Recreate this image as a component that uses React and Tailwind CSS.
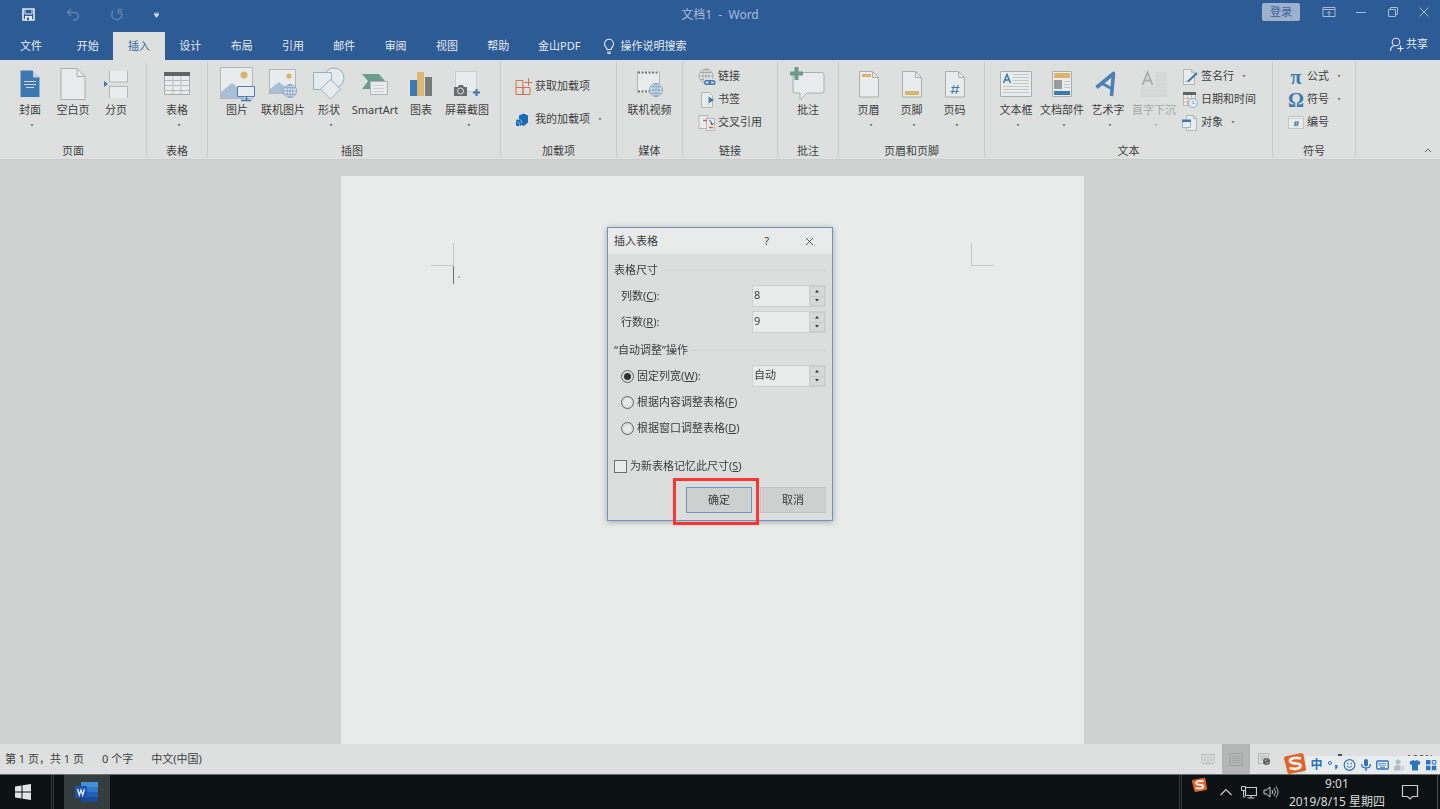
import React from "react";

const tabs = ["开始", "插入", "设计", "布局", "引用", "邮件", "审阅", "视图", "帮助"];

function Svg({ w, h, children, className = "" }) {
    return (
        <svg
            width={w}
            height={h}
            viewBox={`0 0 ${w} ${h}`}
            fill="none"
            className={`shrink-0 ${className}`}
            aria-hidden="true"
        >
            {children}
        </svg>
    );
}

function Arrow({ className = "" }) {
    return (
        <Svg w={4} h={3} className={className}>
            <path d="M0.500 0h3L2.500 2h-1z" fill="#7b7e7e" />
        </Svg>
    );
}

/* ---------- large ribbon icons ---------- */

const Globe = ({ x, y, r, stroke = "#7f9fc4" }) => (
    <g stroke={stroke} strokeWidth="0.9" transform={`translate(${x} ${y})`}>
        <circle r={r} fill="#e4e9ec" />
        <ellipse rx={r * 0.45} ry={r} />
        <path d={`M${-r} 0H${r}M${-r * 0.85} ${-r * 0.5}H${r * 0.85}M${-r * 0.85} ${r * 0.5}H${r * 0.85}M0 ${-r}V${r}`} />
    </g>
);

const CoverIcon = () => (
    <Svg w={20} h={28}>
        <path d="M0.5 0.5h12l7 7v19.5h-19z" fill="#3d78b0" />
        <path d="M13 0.5v7h6.500z" fill="#c3d3e2" />
        <path d="M4 11.500h12M4 14.500h12M6 17.500h8" stroke="#c9d8e6" />
    </Svg>
);

const BlankIcon = () => (
    <Svg w={26} h={34}>
        <path d="M1 1.500h16l8 8v23h-24z" fill="#e9ecec" stroke="#abaead" />
        <path d="M17 1.500v8h8" stroke="#abaead" />
    </Svg>
);

const BreakIcon = () => (
    <Svg w={26} h={30}>
        <path d="M6 2h19v11H6zM6 18h19v11H6z" fill="#e9ecec" />
        <path d="M6.500 2v11h18V2M6.500 29V17.500h18V29" stroke="#b4b7b6" />
        <path d="M1 12v6l4-3z" fill="#3d78b0" />
    </Svg>
);

const TableIcon = () => (
    <Svg w={26} h={26}>
        <path d="M0.500 1.500h25v22h-25z" fill="#e9ecec" stroke="#a9acab" />
        <path d="M0 1h26v4H0z" fill="#616464" />
        <path d="M9 5v18M17 5v18M1 9.500h24M1 14.500h24M1 19.500h24" stroke="#b9bcbb" />
    </Svg>
);

const PictureIcon = () => (
    <Svg w={36} h={36}>
        <path d="M1.500 1.500h32v31h-32z" fill="#e9ecec" stroke="#b4b7b6" />
        <circle cx="25" cy="9" r="3.500" fill="#dcb368" />
        <path d="M2 32V26l11-9 12 10v5z" fill="#a9bfd6" />
        <path d="M18.500 20.500h17v10h-17z" fill="#e9ecec" stroke="#4a82b8" />
        <path d="M27.500 31v3M22 34.500h10" stroke="#3d78b0" strokeWidth="1.500" />
    </Svg>
);

const OnlinePictureIcon = () => (
    <Svg w={30} h={32}>
        <path d="M1.500 1.500h26v24h-26z" fill="#e9ecec" stroke="#b4b7b6" />
        <circle cx="21" cy="8" r="2.600" fill="#dcb368" />
        <path d="M2 25v-4l9-7 9 7v4z" fill="#a9bfd6" />
        <Globe x={22} y={23} r={6.500} />
    </Svg>
);

const ShapesIcon = () => (
    <Svg w={34} h={34}>
        <g fill="#e7ebec" stroke="#92aecb">
            <circle cx="22" cy="11" r="10" />
            <path d="M1.500 5.500h18v17h-18z" />
            <path d="M18.500 12.500l10 9.500-10 10-10-10z" />
        </g>
    </Svg>
);

const SmartArtIcon = () => (
    <Svg w={28} h={26}>
        <path d="M1 3h17l6 7-6 8H1l6-8z" fill="#6b9c8c" />
        <path d="M9.500 10.500h17v13h-17z" fill="#e9ecec" stroke="#b0b3b2" />
        <path d="M12 14.500h11M12 17.500h11M12 20.500h11" stroke="#cfd2d1" />
    </Svg>
);

const ChartIcon = () => (
    <Svg w={22} h={26}>
        <path d="M0 9h7v16H0z" fill="#3d78b0" />
        <path d="M7 1h7v24H7z" fill="#dcb875" />
        <path d="M15 6h7v19h-7z" fill="#787b7b" />
    </Svg>
);

const ScreenshotIcon = () => (
    <Svg w={28} h={28}>
        <path d="M2.500 1.500h21v20h-21z" fill="#e9ecec" stroke="#b4b7b6" strokeDasharray="1 1" />
        <path d="M1 17h4l1-2h4l1 2h3v9H1z" fill="#6a6d6d" />
        <circle cx="7.500" cy="21" r="3" fill="#6a6d6d" stroke="#dde0df" />
        <path d="M23.500 19v7M20 22.500h7" stroke="#3d78b0" strokeWidth="2" />
    </Svg>
);

const VideoIcon = () => (
    <Svg w={28} h={30}>
        <path d="M2 2h21v22H2z" fill="#e9ecec" />
        <path d="M1.500 2v22M23.500 2v22" stroke="#b4b7b6" />
        <path d="M2 3.500h21M2 22.500h21" stroke="#6f7272" strokeWidth="2" strokeDasharray="2 1.500" />
        <Globe x={20} y={21} r={6.500} />
    </Svg>
);

const CommentIcon = () => (
    <Svg w={36} h={34}>
        <path d="M3 5.500h29q2 0 2 2V24q0 2-2 2H17l-7 7v-7H5q-2 0-2-2z" fill="#e9ecec" stroke="#abaead" />
        <path d="M6.500 0v13M0 6.500h13" stroke="#6b9c8c" strokeWidth="4" />
    </Svg>
);

const PageShape = () => (
    <>
        <path d="M0.500 1.500h13l6 6v19.500h-19z" fill="#e9ecec" stroke="#abaead" />
        <path d="M13.500 1.500v6h6" stroke="#abaead" />
    </>
);

const HeaderIcon = () => (
    <Svg w={20} h={28}>
        <PageShape />
        <path d="M3 4h9v3H3z" fill="#dcb368" />
    </Svg>
);

const FooterIcon = () => (
    <Svg w={20} h={28}>
        <PageShape />
        <path d="M3 21h14v4H3z" fill="#dcb368" />
    </Svg>
);

const PageNumberIcon = () => (
    <Svg w={20} h={28}>
        <PageShape />
        <path d="M9 15l-2 9M13 15l-2 9M6.500 17.500h8M5.500 21.500h8" stroke="#3d78b0" />
    </Svg>
);

const TextBoxIcon = () => (
    <Svg w={32} h={28}>
        <path d="M0.500 1.500h31v25h-31z" fill="#e9ecec" stroke="#abaead" />
        <path d="M3.500 13L7 4.500l3.500 8.500M5 10h4.500" stroke="#3d78b0" strokeWidth="1.500" />
        <path d="M13 4.500h16M13 7.500h16M13 10.500h16M13 13.500h16M3 16.500h26M3 19.500h26M3 22.500h26" stroke="#c6c9c8" />
    </Svg>
);

const PartsIcon = () => (
    <Svg w={20} h={28}>
        <path d="M0.500 1.500h19v25h-19z" fill="#e9ecec" stroke="#abaead" />
        <path d="M2 3h16v5H2z" fill="#dcb368" />
        <path d="M2 10h8v9H2z" fill="#989b9a" />
        <path d="M12 11.500h6M12 14.500h6M12 17.500h6" stroke="#c6c9c8" />
        <path d="M2 21h16v4H2z" fill="#3d78b0" />
    </Svg>
);

const WordArtIcon = () => (
    <Svg w={22} h={28} className="mr-1">
        <path d="M1.500 17.500L18.500 3.500L16.500 26" stroke="#4a80b6" strokeWidth="3.600" strokeLinejoin="round" />
        <path d="M7 13.500L17.500 19" stroke="#4a80b6" strokeWidth="3" />
    </Svg>
);

const DropCapIcon = () => (
    <Svg w={26} h={28}>
        <path d="M14 2h12v25H0V17h14z" fill="#d5d8d7" />
        <path d="M14 4.500h12M14 8.500h12M14 12.500h12M0 18.500h26M0 22.500h26" stroke="#dadddc" />
        <path d="M1.500 15L6.500 2.500l5 12.500M3.500 10.500h6.500" stroke="#a9acab" strokeWidth="1.800" />
    </Svg>
);

/* ---------- small ribbon icons ---------- */

const GetAddinIcon = () => (
    <Svg w={18} h={18}>
        <path d="M1 2.500h7v14H1zM1 9.500h14v7H1M8 9.500v7" stroke="#cf7350" />
        <path d="M13.500 0v8M9.500 4.500h8" stroke="#cf7350" />
    </Svg>
);

const MyAddinIcon = () => (
    <Svg w={14} h={14} className="mr-1">
        <path d="M4 2.500L8.500 0.500 13 2.500v7l-4 3.500-5-2z" fill="#1b6cb8" />
        <path d="M1 7.500q2.500-2 5 0v5q-3 1.500-5 0z" fill="#1b6cb8" />
        <path d="M1 6.800q3.500-2 5.500.7v3M2 9.500q2-1 2.500 1v2.500" stroke="#8db9e2" strokeWidth="0.900" />
    </Svg>
);

const LinkIcon = () => (
    <Svg w={18} h={18}>
        <Globe x={8} y={8} r={7} stroke="#a0a3a2" />
        <path d="M6 11h12v7H6z" fill="#dde0df" />
        <rect x="6.700" y="12.700" width="5.600" height="3.600" rx="1.800" stroke="#3d78b0" strokeWidth="1.400" />
        <rect x="11.200" y="12.700" width="5.600" height="3.600" rx="1.800" stroke="#3d78b0" strokeWidth="1.400" />
    </Svg>
);

const BookmarkIcon = () => (
    <Svg w={18} h={18}>
        <path d="M3.500 1.500h8l3 3v12h-11z" fill="#e9ecec" stroke="#b4b7b6" />
        <path d="M10.500 5v9" stroke="#a9bfd6" />
        <path d="M11 6v6l5-3z" fill="#3d78b0" />
    </Svg>
);

const CrossRefIcon = () => (
    <Svg w={18} h={18}>
        <path d="M1 1.500h9v13H1z" fill="#e9ecec" stroke="#b4b7b6" />
        <path d="M8.500 4.500h8v12h-8z" fill="#e9ecec" stroke="#b4b7b6" />
        <path d="M5 6.500h4M11 13.500h4" stroke="#c96a3a" strokeWidth="1.500" />
        <path d="M11 6.500q3 0 3 4M12.500 9l1.500 2 1.500-2" stroke="#616464" />
    </Svg>
);

const SignatureIcon = () => (
    <Svg w={16} h={18}>
        <path d="M1.500 1.500h8l3 3v12h-11z" fill="#e9ecec" stroke="#b4b7b6" />
        <path d="M9.500 1.500v3h3" stroke="#b4b7b6" />
        <path d="M3 13.500h3" stroke="#8fb0d2" />
        <path d="M6 13.500L15 5" stroke="#3d78b0" strokeWidth="2" />
    </Svg>
);

const DateIcon = () => (
    <Svg w={16} h={18}>
        <path d="M1.500 2.500h12v12h-12z" fill="#e9ecec" stroke="#c3b3ab" />
        <path d="M1 1h13v3H1z" fill="#616464" />
        <path d="M5.500 4v10M9.500 4v10M2 7.500h11M2 11h11" stroke="#d5b7a5" />
        <circle cx="11" cy="12" r="4.500" fill="#e4eaef" stroke="#8fb0d2" />
        <path d="M11 9.500V12.500h2" stroke="#8fb0d2" />
    </Svg>
);

const ObjectIcon = () => (
    <Svg w={16} h={18}>
        <path d="M4.500 1.500h7l3 3v12h-10z" fill="#e9ecec" stroke="#b4b7b6" />
        <path d="M11.500 1.500v3h3" stroke="#b4b7b6" />
        <path d="M0.500 6.500h8v7h-8z" fill="#e9ecec" stroke="#9db8d3" />
        <path d="M0 5.500h9v2.500H0z" fill="#3d78b0" />
    </Svg>
);

const GreekIcon = ({ children }) => (
    <span className="font-['Liberation_Serif',serif] text-xl font-bold leading-5 text-[#3d78b0]">
        {children}
    </span>
);

const NumberIcon = () => (
    <Svg w={16} h={16}>
        <path d="M0.500 1.500h15v12h-15z" fill="#e9ecec" stroke="#c3c6c5" />
        <path d="M2 3.500h12" stroke="#d2d5d4" />
        <path d="M8 6l-1 5.500M10 6l-1 5.500M6 7.800h5M5.500 9.800h5" stroke="#3d78b0" strokeWidth="0.900" />
    </Svg>
);

/* ---------- ribbon building blocks ---------- */

function Group({ label, className = "", children }) {
    return (
        <section className={`flex shrink-0 flex-col border-r border-[#c9cccb] ${className}`}>
            <div className="flex flex-1 justify-center">{children}</div>
            <h2 className="h-3 text-center leading-3">{label}</h2>
        </section>
    );
}

function BigButton({ icon, label, arrow, disabled, className = "w-[46px]" }) {
    return (
        <button
            disabled={disabled}
            className={`flex flex-col items-center whitespace-nowrap pt-1 disabled:text-[#a6a9a8] ${className}`}
        >
            <span className="flex h-9 items-center">{icon}</span>
            <span className="leading-4">{label}</span>
            {arrow && <Arrow className={disabled ? "ml-1 mt-1.5 opacity-40" : "ml-1 mt-1.5"} />}
        </button>
    );
}

function SmallButton({ icon, label, arrow, className = "h-[23px]" }) {
    return (
        <button className={`flex items-center gap-0.5 whitespace-nowrap ${className}`}>
            <span className="flex w-[18px] justify-center">{icon}</span>
            <span>{label}</span>
            {arrow && <Arrow className="ml-1.5" />}
        </button>
    );
}

function TitleBar() {
    return (
        <header className="relative flex h-8 items-start justify-between text-[#a9bcd6]">
            <div className="flex h-[29px] items-center pl-[22px]">
                <button aria-label="保存" className="w-11">
                    <Svg w={13} h={13}>
                        <path d="M1 1h11v11H1z" stroke="#e4eaf1" strokeWidth="1.600" />
                        <path d="M3 2v4h7V2" stroke="#e4eaf1" />
                        <path d="M3 8h7v4H3z" fill="#e4eaf1" />
                        <path d="M5 9.500h2V12H5z" fill="#2d5b96" />
                    </Svg>
                </button>
                <button aria-label="撤消" className="w-11">
                    <Svg w={14} h={13}>
                        <path d="M5 1L1.500 4.500 5 8M2 4.500h6.500a3.500 3.500 0 0 1 0 7.500H7" stroke="#5b7fb0" strokeWidth="1.700" />
                    </Svg>
                </button>
                <button aria-label="恢复" className="w-11">
                    <Svg w={14} h={13}>
                        <path d="M3.500 2.800a5 5 0 1 0 6.500 0M8 1.500h4.500M8.500 1.500v4.500" stroke="#5b7fb0" strokeWidth="1.600" />
                    </Svg>
                </button>
                <button aria-label="自定义快速访问工具栏">
                    <Svg w={5} h={6}>
                        <path d="M0 1h5M0 2h5L2.500 5.500z" stroke="#dbe4ef" strokeWidth="0.600" fill="#dbe4ef" />
                    </Svg>
                </button>
            </div>
            <h1 className="absolute left-1/2 top-0 -translate-x-1/2 whitespace-pre text-xs leading-[29px]">
                {"文档1  -  Word"}
            </h1>
            <div className="flex h-6 items-center gap-[18px] pr-[10px]">
                <button className="mr-1 h-[18px] rounded-xs bg-[#9db1cd] px-2 leading-[18px] text-[#3a639c]">
                    登录
                </button>
                <button aria-label="功能区显示选项">
                    <Svg w={14} h={12}>
                        <path d="M1 1.500h12v9H1zM1 3.500h12M7 10V5.500M5 7.500l2-2 2 2" stroke="#a9bcd6" />
                    </Svg>
                </button>
                <button aria-label="最小化">
                    <Svg w={14} h={12}>
                        <path d="M2 6.500h10" stroke="#a9bcd6" />
                    </Svg>
                </button>
                <button aria-label="还原">
                    <Svg w={14} h={12}>
                        <path d="M2.500 3.500h7v7h-7zM4.500 3v-1.500h7v7H10" stroke="#a9bcd6" />
                    </Svg>
                </button>
                <button aria-label="关闭">
                    <Svg w={12} h={12}>
                        <path d="M1.500 1.500l9 9M10.500 1.500l-9 9" stroke="#a9bcd6" />
                    </Svg>
                </button>
            </div>
        </header>
    );
}

function TabBar() {
    return (
        <div className="flex h-7 text-[#e6ebf1]">
            <button className="w-[62px]">文件</button>
            <nav className="flex w-[462px] shrink-0">
                {tabs.map((t) => (
                    <button
                        key={t}
                        className={
                            t === "插入"
                                ? "flex-1 bg-[#dde0df] text-[#3a689f]"
                                : "flex-1"
                        }
                    >
                        {t}
                    </button>
                ))}
            </nav>
            <button className="shrink-0 px-3.5">金山PDF</button>
            <button className="ml-2 flex shrink-0 items-center gap-1">
                <Svg w={14} h={16}>
                    <path d="M5 11.500C5 9.500 2.500 9 2.500 5.800a4.500 4.500 0 0 1 9 0C11.500 9 9 9.500 9 11.500zM5 14h4M5.500 15.500h3" stroke="#e6ebf1" strokeWidth="1.100" />
                </Svg>
                操作说明搜索
            </button>
            <button className="ml-auto flex h-6 items-center gap-0.5 pr-3">
                <Svg w={15} h={15}>
                    <circle cx="7" cy="5" r="3.800" stroke="#dfe6ee" strokeWidth="1.100" />
                    <path d="M1.500 14c0-3 2-5 4.500-5.500M11.500 8.500v6M8.500 11.500h6" stroke="#dfe6ee" strokeWidth="1.200" />
                </Svg>
                共享
            </button>
        </div>
    );
}

function Ribbon() {
    return (
        <div className="flex h-[100px] border-b border-[#c9cccb] bg-[#dde0df] py-0.5 text-[#3d4040]">
            <Group label="页面" className="w-[147px]">
                <BigButton className="w-[43px]" icon={<CoverIcon />} label="封面" arrow />
                <BigButton className="w-[43px]" icon={<BlankIcon />} label="空白页" />
                <BigButton className="w-[43px]" icon={<BreakIcon />} label="分页" />
            </Group>
            <Group label="表格" className="w-[61px]">
                <BigButton icon={<TableIcon />} label="表格" arrow />
            </Group>
            <Group label="插图" className="w-[293px] pr-1">
                <BigButton icon={<PictureIcon />} label="图片" />
                <BigButton icon={<OnlinePictureIcon />} label="联机图片" />
                <BigButton icon={<ShapesIcon />} label="形状" arrow />
                <BigButton icon={<SmartArtIcon />} label="SmartArt" />
                <BigButton icon={<ChartIcon />} label="图表" />
                <BigButton icon={<ScreenshotIcon />} label="屏幕截图" arrow />
            </Group>
            <Group label="加载项" className="w-[116px]">
                <div className="flex flex-col pt-2">
                    <SmallButton className="h-[33px]" icon={<GetAddinIcon />} label="获取加载项" />
                    <SmallButton className="h-[33px]" icon={<MyAddinIcon />} label="我的加载项" arrow />
                </div>
            </Group>
            <Group label="媒体" className="w-[66px]">
                <BigButton icon={<VideoIcon />} label="联机视频" />
            </Group>
            <Group label="链接" className="w-[95px]">
                <div className="flex flex-col pt-[3px]">
                    <SmallButton icon={<LinkIcon />} label="链接" />
                    <SmallButton icon={<BookmarkIcon />} label="书签" />
                    <SmallButton icon={<CrossRefIcon />} label="交叉引用" />
                </div>
            </Group>
            <Group label="批注" className="w-[61px]">
                <BigButton icon={<CommentIcon />} label="批注" />
            </Group>
            <Group label="页眉和页脚" className="w-[146px]">
                <BigButton className="w-[43px]" icon={<HeaderIcon />} label="页眉" arrow />
                <BigButton className="w-[43px]" icon={<FooterIcon />} label="页脚" arrow />
                <BigButton className="w-[43px]" icon={<PageNumberIcon />} label="页码" arrow />
            </Group>
            <Group label="文本" className="w-[288px]">
                <BigButton icon={<TextBoxIcon />} label="文本框" arrow />
                <BigButton icon={<PartsIcon />} label="文档部件" arrow />
                <BigButton icon={<WordArtIcon />} label="艺术字" arrow />
                <BigButton icon={<DropCapIcon />} label="首字下沉" arrow disabled />
                <div className="ml-1 mr-2 flex flex-col pt-[3px]">
                    <SmallButton icon={<SignatureIcon />} label="签名行" arrow />
                    <SmallButton icon={<DateIcon />} label="日期和时间" />
                    <SmallButton icon={<ObjectIcon />} label="对象" arrow />
                </div>
            </Group>
            <Group label="符号" className="w-[83px]">
                <div className="flex flex-col pt-[3px]">
                    <SmallButton icon={<GreekIcon>π</GreekIcon>} label="公式" arrow />
                    <SmallButton icon={<GreekIcon>Ω</GreekIcon>} label="符号" arrow />
                    <SmallButton icon={<NumberIcon />} label="编号" />
                </div>
            </Group>
            <button aria-label="折叠功能区" className="ml-auto self-end pb-1 pr-2">
                <Svg w={8} h={6}>
                    <path d="M1 5l3-3 3 3" stroke="#5f6262" />
                </Svg>
            </button>
        </div>
    );
}

function Spinner({ id, value }) {
    return (
        <span className="flex h-[22px] w-[74px] border border-[#cdd0cf] bg-[#e8ebea]">
            <input
                id={id}
                defaultValue={value}
                className="w-full min-w-0 flex-1 pb-0.5 pl-px outline-none"
            />
            <span className="flex w-4 flex-col">
                <button aria-label="增加" className="flex flex-1 items-center justify-center border border-[#c9cccb] bg-[#d6d9d8]">
                    <Svg w={4} h={3}>
                        <path d="M0 2.500h4L2 0z" fill="#333636" />
                    </Svg>
                </button>
                <button aria-label="减少" className="flex flex-1 items-center justify-center border border-t-0 border-[#c9cccb] bg-[#d6d9d8]">
                    <Svg w={4} h={3}>
                        <path d="M0 0h4L2 2.500z" fill="#333636" />
                    </Svg>
                </button>
            </span>
        </span>
    );
}

function Heading({ children }) {
    return (
        <h3 className="flex h-[26px] items-center gap-1">
            {children}
            <span className="h-px flex-1 bg-[#d2d5d4]"></span>
        </h3>
    );
}

function Radio({ id, checked, children }) {
    return (
        <span className="flex items-center gap-[3px]">
            <input
                type="radio"
                name="autofit"
                id={id}
                defaultChecked={checked}
                className="size-[13px] appearance-none rounded-full border border-[#5f6262] bg-[#e8ebea] bg-clip-content p-0.5 checked:bg-[#303333]"
            />
            <label htmlFor={id}>{children}</label>
        </span>
    );
}

function InsertTableDialog() {
    return (
        <div
            role="dialog"
            aria-label="插入表格"
            className="fixed left-1/2 top-[227px] w-[226px] -translate-x-1/2 border border-[#6b96c3] bg-[#dbdedd] text-[#3a3d3d] shadow-[0_1px_6px_rgba(0,0,0,0.3)]"
        >
            <div className="flex h-[26px] items-center bg-[#e8ebea] pl-1.5 pr-[18px]">
                <h2 className="mr-auto">插入表格</h2>
                <button aria-label="帮助" className="mr-9">?</button>
                <button aria-label="关闭">
                    <Svg w={9} h={9}>
                        <path d="M1 1l7 7M8 1l-7 7" stroke="#4d5050" />
                    </Svg>
                </button>
            </div>
            <div className="px-1.5 pb-[7px] pt-[3px]">
                <Heading>表格尺寸</Heading>
                <div className="flex h-[26px] items-center justify-between pl-[7px]">
                    <label htmlFor="cols">列数(<u>C</u>):</label>
                    <Spinner id="cols" value="8" />
                </div>
                <div className="flex h-[26px] items-center justify-between pl-[7px]">
                    <label htmlFor="rows">行数(<u>R</u>):</label>
                    <Spinner id="rows" value="9" />
                </div>
                <div className="h-0.5"></div>
                <Heading>“自动调整”操作</Heading>
                <div className="flex h-[26px] items-center justify-between pl-[7px]">
                    <Radio id="fixed" checked>固定列宽(<u>W</u>):</Radio>
                    <Spinner id="width" value="自动" />
                </div>
                <div className="flex h-[26px] items-center pl-[7px]">
                    <Radio id="content">根据内容调整表格(<u>F</u>)</Radio>
                </div>
                <div className="flex h-[26px] items-center pl-[7px]">
                    <Radio id="window">根据窗口调整表格(<u>D</u>)</Radio>
                </div>
                <div className="mt-3 flex h-[26px] items-center gap-[3px]">
                    <input
                        type="checkbox"
                        id="remember"
                        className="size-[13px] appearance-none border border-[#6c6f6f] bg-[#e8ebea]"
                    />
                    <label htmlFor="remember">为新表格记忆此尺寸(<u>S</u>)</label>
                </div>
                <div className="mt-2 flex justify-end gap-2">
                    <div className="relative">
                        <button className="h-[26px] w-[66px] border border-[#6b96c3] bg-[#cdd0cf]">确定</button>
                        <span className="pointer-events-none absolute -bottom-3 -left-[13px] -right-[7px] -top-[9px] border-3 border-[#fa3532]"></span>
                    </div>
                    <button className="h-[26px] w-[66px] border border-[#c3c6c5] bg-[#cdd0cf]">取消</button>
                </div>
            </div>
        </div>
    );
}

function Sheet() {
    return (
        <main className="flex flex-1 justify-center overflow-hidden bg-[#cfd2d1] pr-4 pt-4">
            <div className="w-[743px] bg-[#e8ebea] px-[90px] pt-[67px]">
                <div className="flex justify-between">
                    <span className="size-[23px] border-b border-r border-[#c6c9c8]"></span>
                    <span className="size-[23px] border-b border-l border-[#c6c9c8]"></span>
                </div>
                <div className="ml-[22px] flex items-center gap-1">
                    <span className="h-[18px] w-px bg-[#6f7272]"></span>
                    <span className="mt-1 size-0.5 bg-[#b6b9b8]"></span>
                </div>
            </div>
        </main>
    );
}

const SogouLogo = ({ size }) => (
    <svg width={size} height={size} viewBox="0 0 22 22" fill="none" className="shrink-0" aria-hidden="true">
        <path d="M1 4.500L17 1q2 0 2.500 1.500L22 17q0 1.500-1.500 2L5.500 22q-1.500 0-2-1.500L0 6.500Q0 5 1 4.500z" fill="#e2622b" />
        <path d="M17 6.500C12 5 5.500 6 6 9.300s10.500.7 10.500 4.200-6.500 4-11 2.500" stroke="#f4efec" strokeWidth="2.800" />
    </svg>
);

function InputMethodBar() {
    return (
        <div className="absolute bottom-0 right-0 flex h-[22px] items-end">
            <SogouLogo size={22} />
            <div className="flex h-[18px] items-center gap-1 bg-[#e9eced] pl-1 pr-[3px] text-[#2b74c2]">
                <button className="w-[13px] text-xs font-bold leading-4">中</button>
                <Svg w={12} h={12}>
                    <circle cx="3" cy="4" r="1.500" stroke="#2b74c2" />
                    <path d="M8 6h2.500v2.500L8.500 11z" fill="#2b74c2" />
                </Svg>
                <Svg w={13} h={12}>
                    <circle cx="6.500" cy="6" r="5.300" stroke="#2b74c2" strokeWidth="1.200" />
                    <path d="M4 7q2.500 3 5 0M4.800 3.500v2M8.200 3.500v2" stroke="#2b74c2" />
                </Svg>
                <Svg w={12} h={12}>
                    <rect x="4" y="0" width="4" height="7.500" rx="2" fill="#2b74c2" />
                    <path d="M1.500 5q0 4 4.500 4t4.500-4M6 9v3" stroke="#2b74c2" strokeWidth="1.300" />
                </Svg>
                <Svg w={13} h={12}>
                    <rect x="0.700" y="2" width="11.600" height="8" rx="1" stroke="#2b74c2" strokeWidth="1.300" />
                    <path d="M2.500 4.500h8M2.500 6.200h8" stroke="#2b74c2" strokeDasharray="1.200 0.800" />
                    <path d="M4 8.200h5" stroke="#2b74c2" />
                </Svg>
                <Svg w={12} h={12}>
                    <circle cx="5" cy="3" r="2.500" fill="#b4bec9" />
                    <path d="M1 11.500V9q0-3 4-3 3 0 4 2v3.500z" fill="#b4bec9" />
                    <rect x="7" y="7" width="4.500" height="4.500" fill="#cfd6de" />
                </Svg>
                <Svg w={12} h={12}>
                    <path d="M4 1q2 1.500 4 0l3.500 2L10.500 6 9 5.500V11.500H3V5.500L1.500 6 0.500 3z" fill="#2b74c2" />
                </Svg>
                <Svg w={12} h={12}>
                    <path d="M1 1h4.500v4.500H1zM1 6.800h4.500v4.500H1zM6.800 6.800h4.500v4.500H6.800z" fill="#2b74c2" />
                    <path d="M7.300 1.500h3.500v3.500H7.300z" stroke="#2b74c2" />
                </Svg>
            </div>
        </div>
    );
}

function StatusBar() {
    return (
        <footer className="relative flex h-[30px] items-center overflow-hidden bg-[#dde0df] pl-[5px] text-[#3d4040]">
            <span>第 1 页，共 1 页</span>
            <span className="ml-[18px]">0 个字</span>
            <span className="ml-[18px]">中文(中国)</span>
            <div className="ml-auto flex h-full items-center">
                <button aria-label="阅读视图" className="flex h-full w-7 items-center justify-center">
                    <Svg w={14} h={12}>
                        <path d="M1 1.500h5l1 1 1-1h5v9H8l-1 1-1-1H1zM7 2.500v9M3 4h2M3 6h2M3 8h2M9 4h2M9 6h2M9 8h2" stroke="#b4b7b6" />
                    </Svg>
                </button>
                <button aria-label="页面视图" className="flex h-full w-7 items-center justify-center bg-[#b4b7b6]">
                    <Svg w={14} h={13}>
                        <path d="M1 0.500h12v12H1z" stroke="#9b9e9d" />
                        <path d="M3 3.500h8M3 5.500h8M3 7.500h8M3 9.500h8" stroke="#a3a6a5" />
                    </Svg>
                </button>
                <button aria-label="Web 版式视图" className="flex h-full w-7 items-center justify-center">
                    <Svg w={14} h={14}>
                        <path d="M1.500 1.500h10v10h-10zM3 4h7M3 6h6M3 8h4" stroke="#b4b7b6" />
                        <circle cx="9.500" cy="9.500" r="3.500" fill="#5f6262" />
                        <path d="M8 9l2-1.500M9.500 12l1.500-2" stroke="#c6c9c8" />
                    </Svg>
                </button>
                <span className="ml-[60px] mr-16 h-2.5 w-1 bg-[#4d5050]"></span>
                <span className="pr-1.5">100%</span>
            </div>
            <InputMethodBar />
        </footer>
    );
}

function Taskbar() {
    return (
        <div className="flex h-[35px] items-stretch border-t border-[#6a6f70] bg-[#0c1214] text-xs text-[#d9dcdb]">
            <button aria-label="开始菜单" className="flex w-[45px] items-center justify-center">
                <Svg w={18} h={18}>
                    <path d="M1 3.500l6.500-1v6H1zM8.500 2.300L17 1v7.500H8.500zM1 9.500h6.500v6l-6.500-1zM8.500 9.500H17V17l-8.500-1.300z" fill="#e1e4e3" />
                </Svg>
            </button>
            <span className="ml-1.5 mr-2.5 w-[3px] border-x border-[#34393b]"></span>
            <button aria-label="Word" className="flex w-[46px] items-center justify-center bg-[#363d3f]">
                <Svg w={24} h={22}>
                    <path d="M6 1h17v5H6z" fill="#4191d8" />
                    <path d="M6 6h17v5H6z" fill="#2f78cc" />
                    <path d="M6 11h17v5H6z" fill="#2260b8" />
                    <path d="M6 16h17v5H6z" fill="#194a96" />
                    <rect x="0" y="5" width="12" height="12" rx="1" fill="#1d55ac" />
                    <path d="M2.500 8l1.800 6L6 9l1.700 5 1.800-6" stroke="#e8edf3" strokeWidth="1.300" />
                </Svg>
            </button>
            <div className="ml-auto flex items-center">
                <span className="mr-2.5 h-full w-[3px] border-x border-[#34393b]"></span>
                <span className="mb-4"><SogouLogo size={15} /></span>
                <button aria-label="显示隐藏的图标" className="ml-3">
                    <Svg w={14} h={10}>
                        <path d="M1.500 8l5.500-5.500L12.500 8" stroke="#c9cccb" strokeWidth="1.200" />
                    </Svg>
                </button>
                <button aria-label="网络" className="ml-2">
                    <Svg w={16} h={14}>
                        <path d="M4.500 2.500h11v8h-11zM10 10.500V13M6.500 13h7" stroke="#c9cccb" strokeWidth="1.200" />
                        <path d="M0.500 1.500h4v4h-4zM2.500 5.500V12h2" stroke="#c9cccb" />
                    </Svg>
                </button>
                <button aria-label="音量" className="ml-1.5">
                    <Svg w={16} h={14}>
                        <path d="M1 5h2.500L7 2v10L3.500 9H1zM9 5q1.500 2 0 4" stroke="#c9cccb" />
                        <path d="M11 3q3 4 0 8M13 1.500q4 5.500 0 11" stroke="#c9cccb" strokeWidth="0.900" />
                    </Svg>
                </button>
                <div className="ml-2.5 whitespace-nowrap pt-0.5 text-center leading-[18px]">
                    <p>9:01</p>
                    <p>2019/8/15 星期四</p>
                </div>
                <button aria-label="通知" className="ml-4">
                    <Svg w={18} h={18}>
                        <path d="M1.500 2.500h15v11h-5L9 16l-2.500-2.500h-5z" stroke="#c9cccb" strokeWidth="1.200" />
                    </Svg>
                </button>
                <span className="ml-[18px] mr-0.5 h-full w-px bg-[#4a4f50]"></span>
            </div>
        </div>
    );
}

export default function App() {
    return (
        <div className="flex h-screen flex-col overflow-hidden font-['Noto_Sans','Noto_Sans_CJK_SC',sans-serif] text-[11px]">
            <div className="bg-[#2d5b96]">
                <TitleBar />
                <TabBar />
            </div>
            <Ribbon />
            <Sheet />
            <StatusBar />
            <Taskbar />
            <InsertTableDialog />
        </div>
    );
}
